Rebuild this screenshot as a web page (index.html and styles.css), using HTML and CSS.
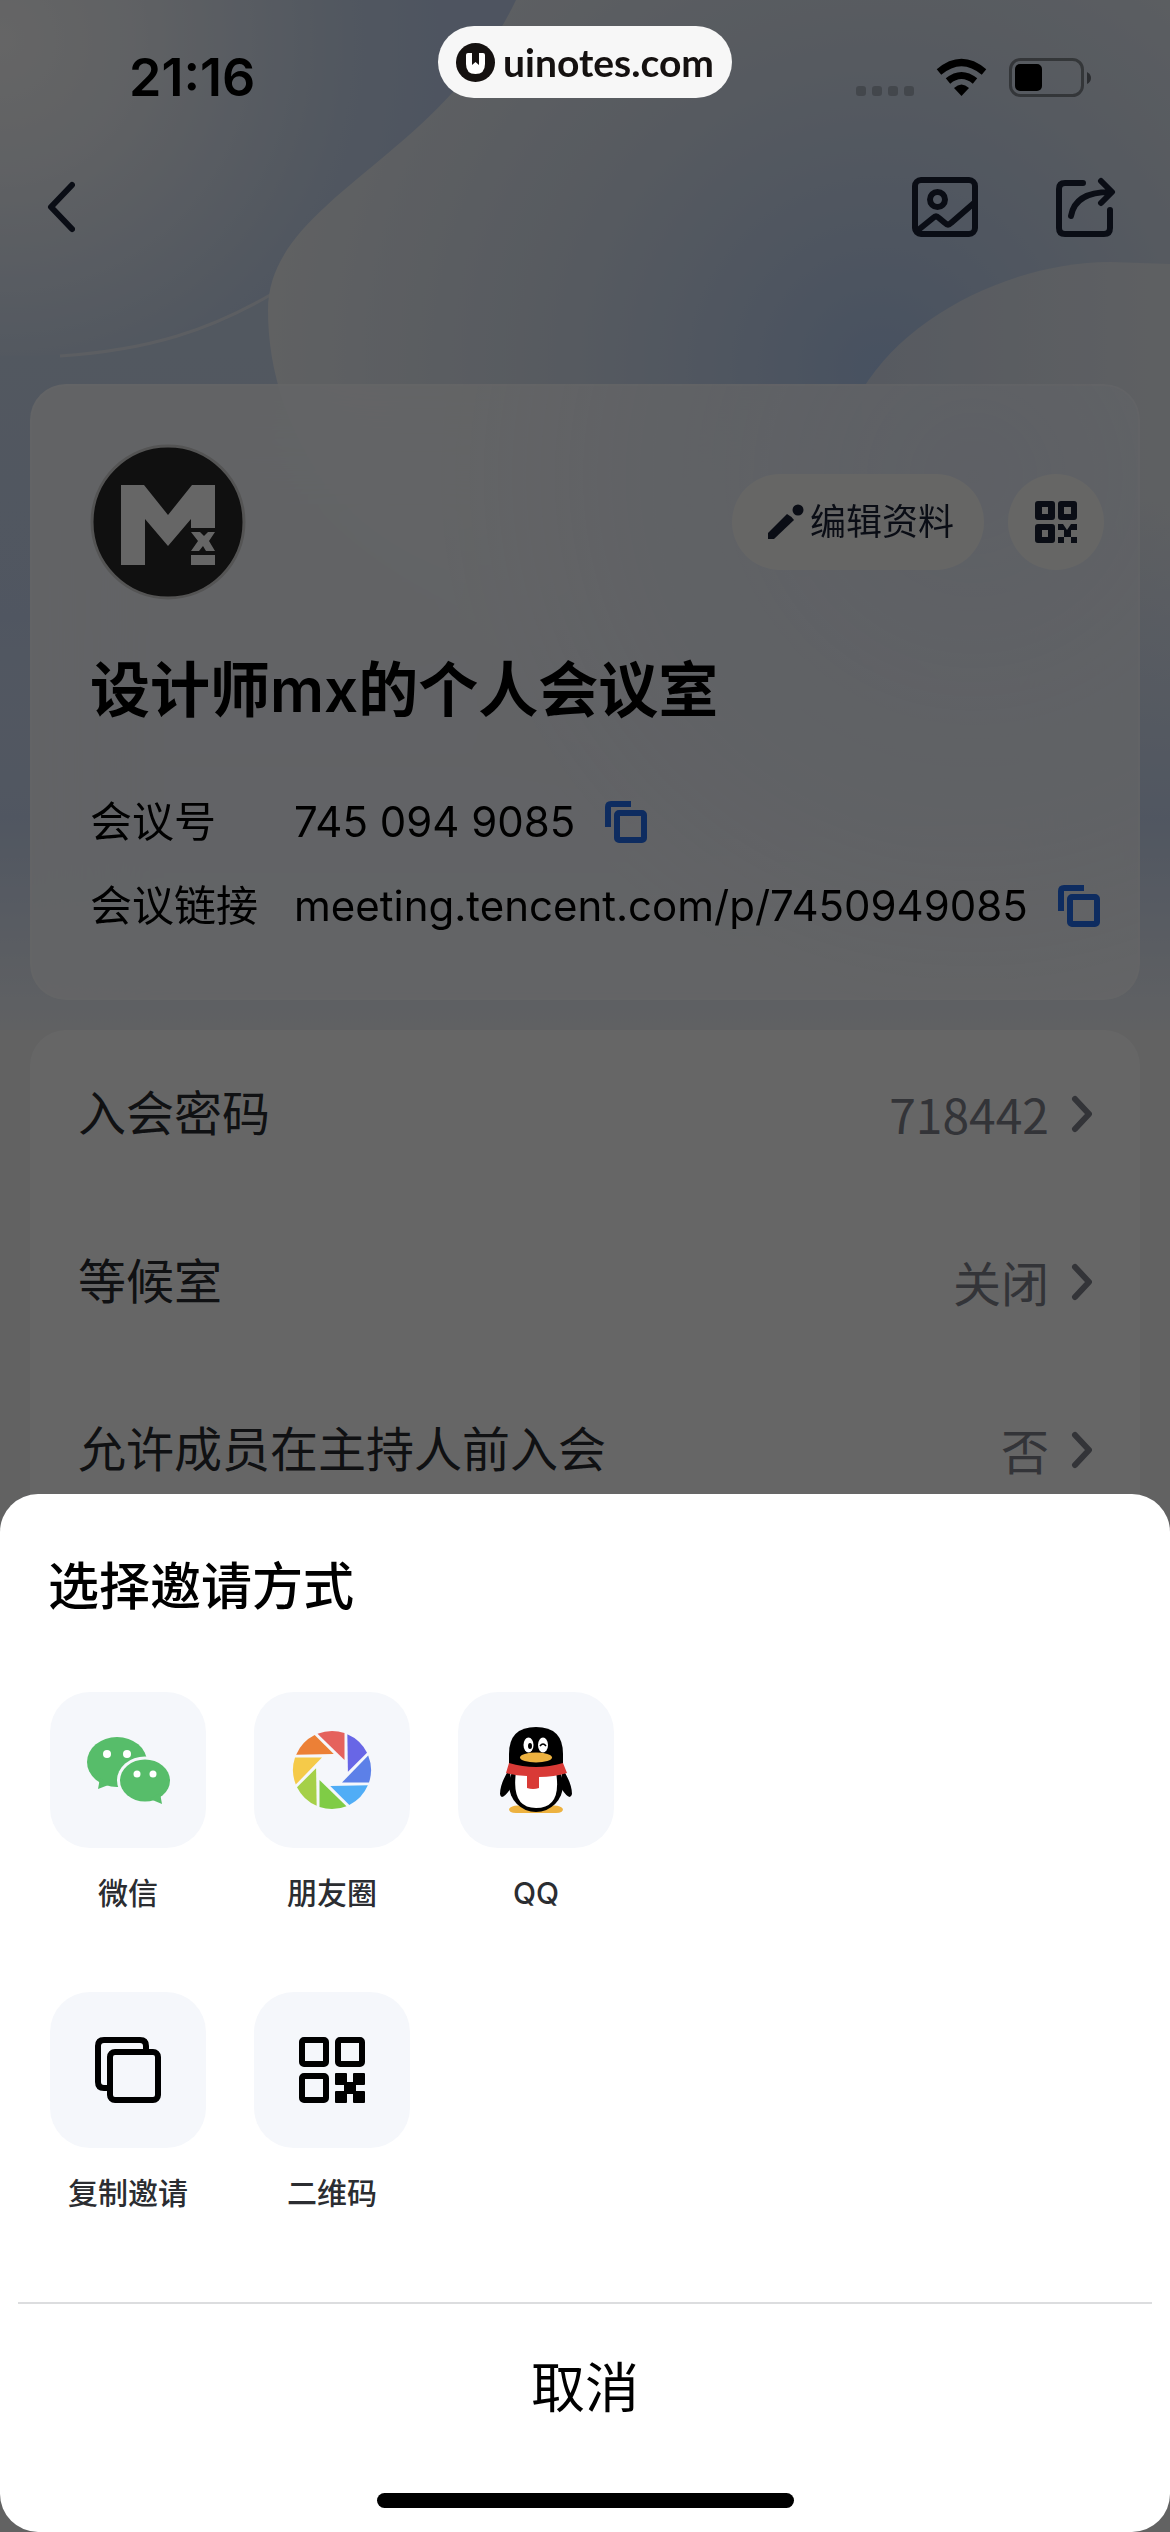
FILE: index.html
```html
<!DOCTYPE html>
<html lang="zh-CN">
<head>
    <meta charset="UTF-8">
    <meta name="viewport" content="width=device-width, initial-scale=1.0">
    <title>个人会议室</title>
    <link rel="stylesheet" href="styles.css">
</head>
<body>
    <div class="page">
        <svg class="waves" viewBox="0 0 1170 1030" preserveAspectRatio="none" aria-hidden="true">
            <defs>
                <radialGradient id="left" gradientUnits="userSpaceOnUse" cx="0" cy="40" r="440">
                    <stop offset="0" stop-color="#fdfdfe"/>
                    <stop offset="0.3" stop-color="#eff3f9"/>
                    <stop offset="0.8" stop-color="#cad9ef"/>
                    <stop offset="1" stop-color="#c3d3f0"/>
                </radialGradient>
                <radialGradient id="middle" gradientUnits="userSpaceOnUse" cx="880" cy="370" r="620">
                    <stop offset="0" stop-color="#b2cbf2"/>
                    <stop offset="0.2" stop-color="#c2d4ef"/>
                    <stop offset="0.5" stop-color="#d7e1f0"/>
                    <stop offset="1" stop-color="#f0f3f6"/>
                </radialGradient>
                <linearGradient id="right" x1="0" y1="0" x2="1" y2="0">
                    <stop offset="0" stop-color="#d8e1f1"/>
                    <stop offset="1" stop-color="#ecf0f5"/>
                </linearGradient>
                <linearGradient id="sides" x1="0" y1="0" x2="0" y2="1">
                    <stop offset="0" stop-color="#d2dfee"/>
                    <stop offset="0.6" stop-color="#c9d8f2"/>
                    <stop offset="1" stop-color="#edf1f7"/>
                </linearGradient>
                <linearGradient id="fade" x1="0" y1="0" x2="0" y2="1">
                    <stop offset="0" stop-color="#c9d8f2" stop-opacity="0"/>
                    <stop offset="0.6" stop-color="#c9d8f2"/>
                    <stop offset="1" stop-color="#f0f3f8"/>
                </linearGradient>
            </defs>
            <rect width="1170" height="1030" fill="url(#sides)"/>
            <path d="M0 0H520C440 190 380 250 270 296C200 340 130 356 0 356Z" fill="url(#left)"/>
            <path d="M60 356C150 350 210 330 272 294" fill="none" stroke="#e6ecf4" stroke-width="3"/>
            <path d="M516 0C440 160 268 200 268 310C268 420 330 560 600 700L1170 1030V0Z" fill="url(#middle)"/>
            <path d="M862 390C910 310 1020 262 1110 262L1170 264V1030C1000 900 862 700 862 390Z" fill="url(#right)"/>
            <rect y="500" width="1170" height="530" fill="url(#fade)"/>
        </svg>

        <div class="status-bar">
            <span class="time">21:16</span>
            <svg class="status-icons" viewBox="0 0 236 40" aria-hidden="true">
                <g fill="#000" opacity="0.2">
                    <rect x="0" y="28" width="10" height="10" rx="3"/>
                    <rect x="16" y="28" width="10" height="10" rx="3"/>
                    <rect x="32" y="28" width="10" height="10" rx="3"/>
                    <rect x="48" y="28" width="10" height="10" rx="3"/>
                </g>
                <g fill="none" stroke="#000" stroke-width="7">
                    <path d="M83 14Q105.500 -5 128 14"/>
                    <path d="M92 23Q105.500 12 119 23"/>
                </g>
                <path d="M98 30Q105.500 23 113 30L105.500 38Z" fill="#000"/>
                <rect x="154.500" y="1.500" width="72" height="36" rx="10" fill="none" stroke="#000" stroke-width="3" opacity="0.400"/>
                <path d="M231 14Q235 16 235 20Q235 24 231 26Z" fill="#000" opacity="0.500"/>
                <rect x="159" y="6" width="27" height="27" rx="5" fill="#000"/>
            </svg>
        </div>

        <div class="toolbar">
            <button class="icon-button" aria-label="返回">
                <svg width="30" height="60" viewBox="0 0 30 60"><path d="M27 8L6 30L27 52" class="line"/></svg>
            </button>
            <div class="toolbar-actions">
                <button class="icon-button" aria-label="图片">
                    <svg width="66" height="60" viewBox="0 0 66 60">
                        <g class="line">
                            <rect x="3" y="3" width="60" height="54" rx="6"/>
                            <circle cx="25.500" cy="22.500" r="7.500"/>
                            <path d="M5 54L21 41Q24 38 27 41L33 46Q36 49 39 46L62 26"/>
                        </g>
                    </svg>
                </button>
                <button class="icon-button" aria-label="分享">
                    <svg width="60" height="60" viewBox="0 0 60 60">
                        <g class="line">
                            <path d="M27 6H9Q3 6 3 12V51Q3 57 9 57H48Q54 57 54 51V33"/>
                            <path d="M15 39Q19 15 54 15M45 4L56 15L45 26"/>
                        </g>
                    </svg>
                </button>
            </div>
        </div>

        <section class="card room">
            <div class="room-top">
                <svg class="avatar" viewBox="0 0 156 156" role="img" aria-label="头像">
                    <circle cx="78" cy="78" r="76" fill="#282828" stroke="#d2d2d2" stroke-width="3"/>
                    <path d="M31 41H54L78 71L102 41H125V84H101V75L78 102L55 75V121H31Z" fill="#fff"/>
                    <path d="M101 88H110L114 92L118 88H125L119 97L125 107H116L113 102L109 107H101L108 97ZM101 111H125V121H101Z" fill="#fff"/>
                </svg>
                <div class="room-actions">
                    <button class="edit-button">
                        <svg width="36" height="36" viewBox="0 0 36 36" fill="#1a2236">
                            <path d="M0 29L19 10Q23 12 26 16L6 35H0Z"/>
                            <circle cx="30" cy="6" r="5.500"/>
                        </svg>
                        编辑资料
                    </button>
                    <button class="qr-button" aria-label="二维码">
                        <svg width="42" height="42" viewBox="0 0 42 42" fill="#1a2236">
                            <path fill-rule="evenodd" d="M3 0H17Q20 0 20 3V16Q20 19 17 19H3Q0 19 0 16V3Q0 0 3 0ZM7 6V13H13V6ZM26 0H39Q42 0 42 3V16Q42 19 39 19H26Q23 19 23 16V3Q23 0 26 0ZM29 6V13H36V6ZM3 23H17Q20 23 20 26V39Q20 42 17 42H3Q0 42 0 39V26Q0 23 3 23ZM7 29V36H13V29Z"/>
                            <path d="M23 23H28L32 29L36 23H42V29H36V36H42V42H36V36H29V42H23V36H29V29H23Z"/>
                        </svg>
                    </button>
                </div>
            </div>
            <h1>设计师mx的个人会议室</h1>
            <div class="info">
                <div class="info-row">
                    <span class="info-label">会议号</span>
                    <span>745 094 9085</span>
                    <button class="icon-button copy" aria-label="复制会议号">
                        <svg width="42" height="42" viewBox="0 0 42 42"><path d="M3 26V6Q3 3 6 3H26"/><rect x="12" y="12" width="27" height="27" rx="2"/></svg>
                    </button>
                </div>
                <div class="info-row">
                    <span class="info-label">会议链接</span>
                    <span>meeting.tencent.com/p/7450949085</span>
                    <button class="icon-button copy" aria-label="复制会议链接">
                        <svg width="42" height="42" viewBox="0 0 42 42"><path d="M3 26V6Q3 3 6 3H26"/><rect x="12" y="12" width="27" height="27" rx="2"/></svg>
                    </button>
                </div>
            </div>
        </section>

        <section class="card settings">
            <button class="setting">
                <span>入会密码</span>
                <span class="setting-value">718442</span>
                <svg width="21" height="38" viewBox="0 0 21 38"><path d="M4 4L18 19L4 34"/></svg>
            </button>
            <button class="setting">
                <span>等候室</span>
                <span class="setting-value">关闭</span>
                <svg width="21" height="38" viewBox="0 0 21 38"><path d="M4 4L18 19L4 34"/></svg>
            </button>
            <button class="setting">
                <span>允许成员在主持人前入会</span>
                <span class="setting-value">否</span>
                <svg width="21" height="38" viewBox="0 0 21 38"><path d="M4 4L18 19L4 34"/></svg>
            </button>
        </section>
    </div>

    <div class="overlay">
        <div class="sheet" role="dialog" aria-labelledby="sheet-title">
            <h2 id="sheet-title">选择邀请方式</h2>
            <div class="share-row">
                <button class="share">
                    <svg class="tile" viewBox="0 0 156 156">
                        <g fill="#57bd6a">
                            <ellipse cx="67" cy="70" rx="30" ry="25"/>
                            <path d="M50 86L48 97L61 92Z"/>
                            <ellipse cx="95" cy="88.500" rx="28" ry="24" fill="#f5f7fb"/>
                            <ellipse cx="95" cy="88.500" rx="25" ry="21"/>
                            <path d="M100 107L112 112L110 101Z"/>
                        </g>
                        <g fill="#fff">
                            <circle cx="57" cy="62" r="4"/>
                            <circle cx="77" cy="62" r="4"/>
                            <circle cx="87" cy="82" r="3.500"/>
                            <circle cx="103" cy="82" r="3.500"/>
                        </g>
                    </svg>
                    微信
                </button>
                <button class="share">
                    <svg class="tile" viewBox="0 0 156 156">
                        <defs><path id="blade" d="M-14.500 -36.200A39 39 0 0 1 12.500 -37V-10Z"/></defs>
                        <g transform="translate(78 78)">
                            <use href="#blade" fill="#e5625d"/>
                            <use href="#blade" fill="#6866e6" transform="rotate(45)"/>
                            <use href="#blade" fill="#5c80e8" transform="rotate(90)"/>
                            <use href="#blade" fill="#50adf6" transform="rotate(135)"/>
                            <use href="#blade" fill="#7fcc46" transform="rotate(180)"/>
                            <use href="#blade" fill="#a5d048" transform="rotate(225)"/>
                            <use href="#blade" fill="#f5ca49" transform="rotate(270)"/>
                            <use href="#blade" fill="#ec8036" transform="rotate(315)"/>
                        </g>
                    </svg>
                    朋友圈
                </button>
                <button class="share">
                    <svg class="tile" viewBox="0 0 156 156">
                        <path d="M51 117Q54 112 66 114H90Q102 112 105 117Q105 121 98 121H58Q51 121 51 117Z" fill="#edb240"/>
                        <path d="M52 76Q42 91 42 102Q43 110 53 96ZM104 76Q114 91 114 102Q112 110 103 96Z"/>
                        <ellipse cx="78" cy="93" rx="27" ry="27"/>
                        <path d="M58 80H98Q104 116 78 116Q53 116 58 80Z" fill="#fff"/>
                        <path d="M51 74V62Q51 35 78 35Q105 35 105 62V74Q78 82 51 74Z"/>
                        <ellipse cx="70.500" cy="53" rx="5" ry="7.500" fill="#fff"/>
                        <ellipse cx="72" cy="54" rx="2" ry="3"/>
                        <ellipse cx="85" cy="53" rx="5" ry="7.500" fill="#fff"/>
                        <path d="M82 54Q85 50 88 54" fill="none" stroke="#000" stroke-width="1.500"/>
                        <ellipse cx="78" cy="65.500" rx="16" ry="5" fill="#edb240"/>
                        <path d="M51 71Q78 79 105 71L109 81Q96 85 81 85V96Q75 98 69 96V84Q57 84 48 81Z" fill="#d93a36"/>
                    </svg>
                    QQ
                </button>
            </div>
            <div class="share-row">
                <button class="share">
                    <svg class="tile" viewBox="0 0 156 156">
                        <g fill="none" stroke="#000" stroke-width="6">
                            <path d="M57 96H54Q48 96 48 90V54Q48 48 54 48H90Q96 48 96 54V57"/>
                            <rect x="60" y="60" width="48" height="48" rx="5"/>
                        </g>
                    </svg>
                    复制邀请
                </button>
                <button class="share">
                    <svg class="tile" viewBox="0 0 156 156">
                        <g fill="none" stroke="#000" stroke-width="6">
                            <rect x="48" y="48" width="24" height="24" rx="2"/>
                            <rect x="84" y="48" width="24" height="24" rx="2"/>
                            <rect x="48" y="84" width="24" height="24" rx="2"/>
                        </g>
                        <rect x="81" y="81" width="12" height="12" rx="1"/>
                        <rect x="99" y="81" width="12" height="12" rx="1"/>
                        <rect x="90" y="90" width="12" height="12"/>
                        <rect x="81" y="99" width="12" height="12" rx="1"/>
                        <rect x="99" y="99" width="12" height="12" rx="1"/>
                    </svg>
                    二维码
                </button>
            </div>
            <button class="cancel">取消</button>
            <div class="home-indicator"></div>
        </div>
    </div>

    <div class="badge">
        <svg width="39" height="39" viewBox="0 0 39 39" aria-hidden="true">
            <circle cx="19.500" cy="19.500" r="19.500" fill="#151110"/>
            <path d="M10 12Q10 10 12 10H16V22L19.500 19L23 22V10H27Q29 10 29 12V21Q29 31 19.500 31Q10 31 10 21Z" fill="#fff"/>
        </svg>
        uinotes.com
    </div>
</body>
</html>
```

FILE: styles.css
```css
* {
    box-sizing: border-box;
}
body {
    margin: 0;
    background-color: #f4f5f6;
    color: #000;
    font-family: Inter, "Noto Sans CJK SC", sans-serif;
    line-height: 1.4;
}
button {
    padding: 0;
    border: none;
    background: none;
    color: inherit;
    font: inherit;
    cursor: pointer;
}
svg {
    display: block;
    flex-shrink: 0;
}
h1, h2 {
    margin: 0;
    font-weight: 500;
}

/* page under the sheet */
.page {
    position: relative;
    height: 100vh;
    overflow: hidden;
}
.waves {
    position: absolute;
    z-index: -1;
    top: 0;
    left: 0;
    width: 100%;
    height: 1030px;
}
.status-bar {
    display: flex;
    align-items: center;
    justify-content: space-between;
    height: 156px;
    padding: 0 78px 0 129px;
}
.time {
    font-size: 52px;
    font-weight: 600;
}
.status-icons {
    width: 236px;
    height: 40px;
}
.toolbar {
    display: flex;
    align-items: center;
    justify-content: space-between;
    height: 102px;
    padding: 0 54px 0 45px;
}
.toolbar-actions {
    display: flex;
    gap: 78px;
}
.line {
    fill: none;
    stroke: #1a2236;
    stroke-width: 6;
    stroke-linecap: round;
    stroke-linejoin: round;
}
.card {
    margin: 0 30px;
    border-radius: 36px;
    background-color: #fff;
}

/* meeting room card */
.room {
    margin-top: 126px;
    padding: 60px 36px 52px 60px;
    background-color: rgba(252, 253, 255, 0.85);
    background-image: radial-gradient(circle at 85% 15%, #eaf0fc 0, rgba(240, 244, 253, 0) 50%);
    box-shadow: inset 0 0 0 2px rgba(255, 255, 255, 0.3);
    backdrop-filter: blur(50px);
}
.room-top {
    display: flex;
    align-items: center;
    justify-content: space-between;
}
.avatar {
    width: 156px;
    height: 156px;
}
.room-actions {
    display: flex;
    gap: 24px;
}
.edit-button {
    display: flex;
    align-items: center;
    justify-content: center;
    gap: 6px;
    height: 96px;
    padding: 0 30px 0 36px;
    border-radius: 48px;
    background-color: #fffffd;
    color: #1a2236;
    font-size: 36px;
}
.qr-button {
    display: flex;
    align-items: center;
    justify-content: center;
    width: 96px;
    height: 96px;
    border-radius: 48px;
    background-color: #fffffd;
}
h1 {
    margin-top: 48px;
    font-size: 60px;
    font-weight: 600;
    line-height: 84px;
}
.info {
    margin-top: 48px;
    font-size: 42px;
    line-height: 84px;
}
.info-row {
    display: flex;
    align-items: center;
}
.info-label {
    width: 204px;
}
.copy {
    margin-left: 30px;
    fill: none;
    stroke: #246ff0;
    stroke-width: 6;
}

/* settings */
.settings {
    margin-top: 30px;
    padding: 0 48px;
}
.setting {
    display: flex;
    align-items: center;
    width: 100%;
    height: 168px;
    color: #2a2c30;
    font-size: 48px;
    text-align: left;
}
.setting-value {
    margin-left: auto;
    margin-right: 22px;
    color: #7f828c;
    font-family: "Noto Sans CJK SC", sans-serif;
}
.setting svg {
    fill: none;
    stroke: #7f828c;
    stroke-width: 6;
    stroke-linecap: round;
    stroke-linejoin: round;
}

/* invite sheet */
.overlay {
    position: fixed;
    inset: 0;
    display: flex;
    flex-direction: column;
    justify-content: flex-end;
    background-color: rgba(0, 0, 0, 0.6);
}
.sheet {
    padding-bottom: 24px;
    border-radius: 38px;
    background-color: #fff;
}
h2 {
    padding: 54px 48px 66px;
    font-size: 51px;
    line-height: 78px;
}
.share-row {
    display: flex;
    gap: 48px;
    height: 300px;
    padding: 0 50px;
}
.share {
    display: flex;
    flex-direction: column;
    align-items: center;
    width: 156px;
    color: #2b2d31;
    font-size: 30px;
    font-weight: 500;
    line-height: 42px;
    white-space: nowrap;
}
.tile {
    width: 156px;
    height: 156px;
    margin-bottom: 24px;
    border-radius: 40px;
    background-color: #f5f7fb;
}
.cancel {
    display: block;
    width: calc(100% - 36px);
    height: 191px;
    margin: 10px 18px 0;
    padding-bottom: 20px;
    border-top: 2px solid #dcdddf;
    font-size: 54px;
}
.home-indicator {
    width: 417px;
    height: 15px;
    margin: 0 auto;
    border-radius: 8px;
    background-color: #000;
}

/* site badge on top of everything */
.badge {
    position: fixed;
    z-index: 2;
    top: 26px;
    left: 50%;
    display: flex;
    align-items: center;
    justify-content: center;
    gap: 8px;
    height: 72px;
    padding: 0 18px;
    border-radius: 36px;
    background-color: #f7f7f7;
    color: #151110;
    font-family: Lato, sans-serif;
    font-size: 39px;
    font-weight: 700;
    transform: translateX(-50%);
}
```
